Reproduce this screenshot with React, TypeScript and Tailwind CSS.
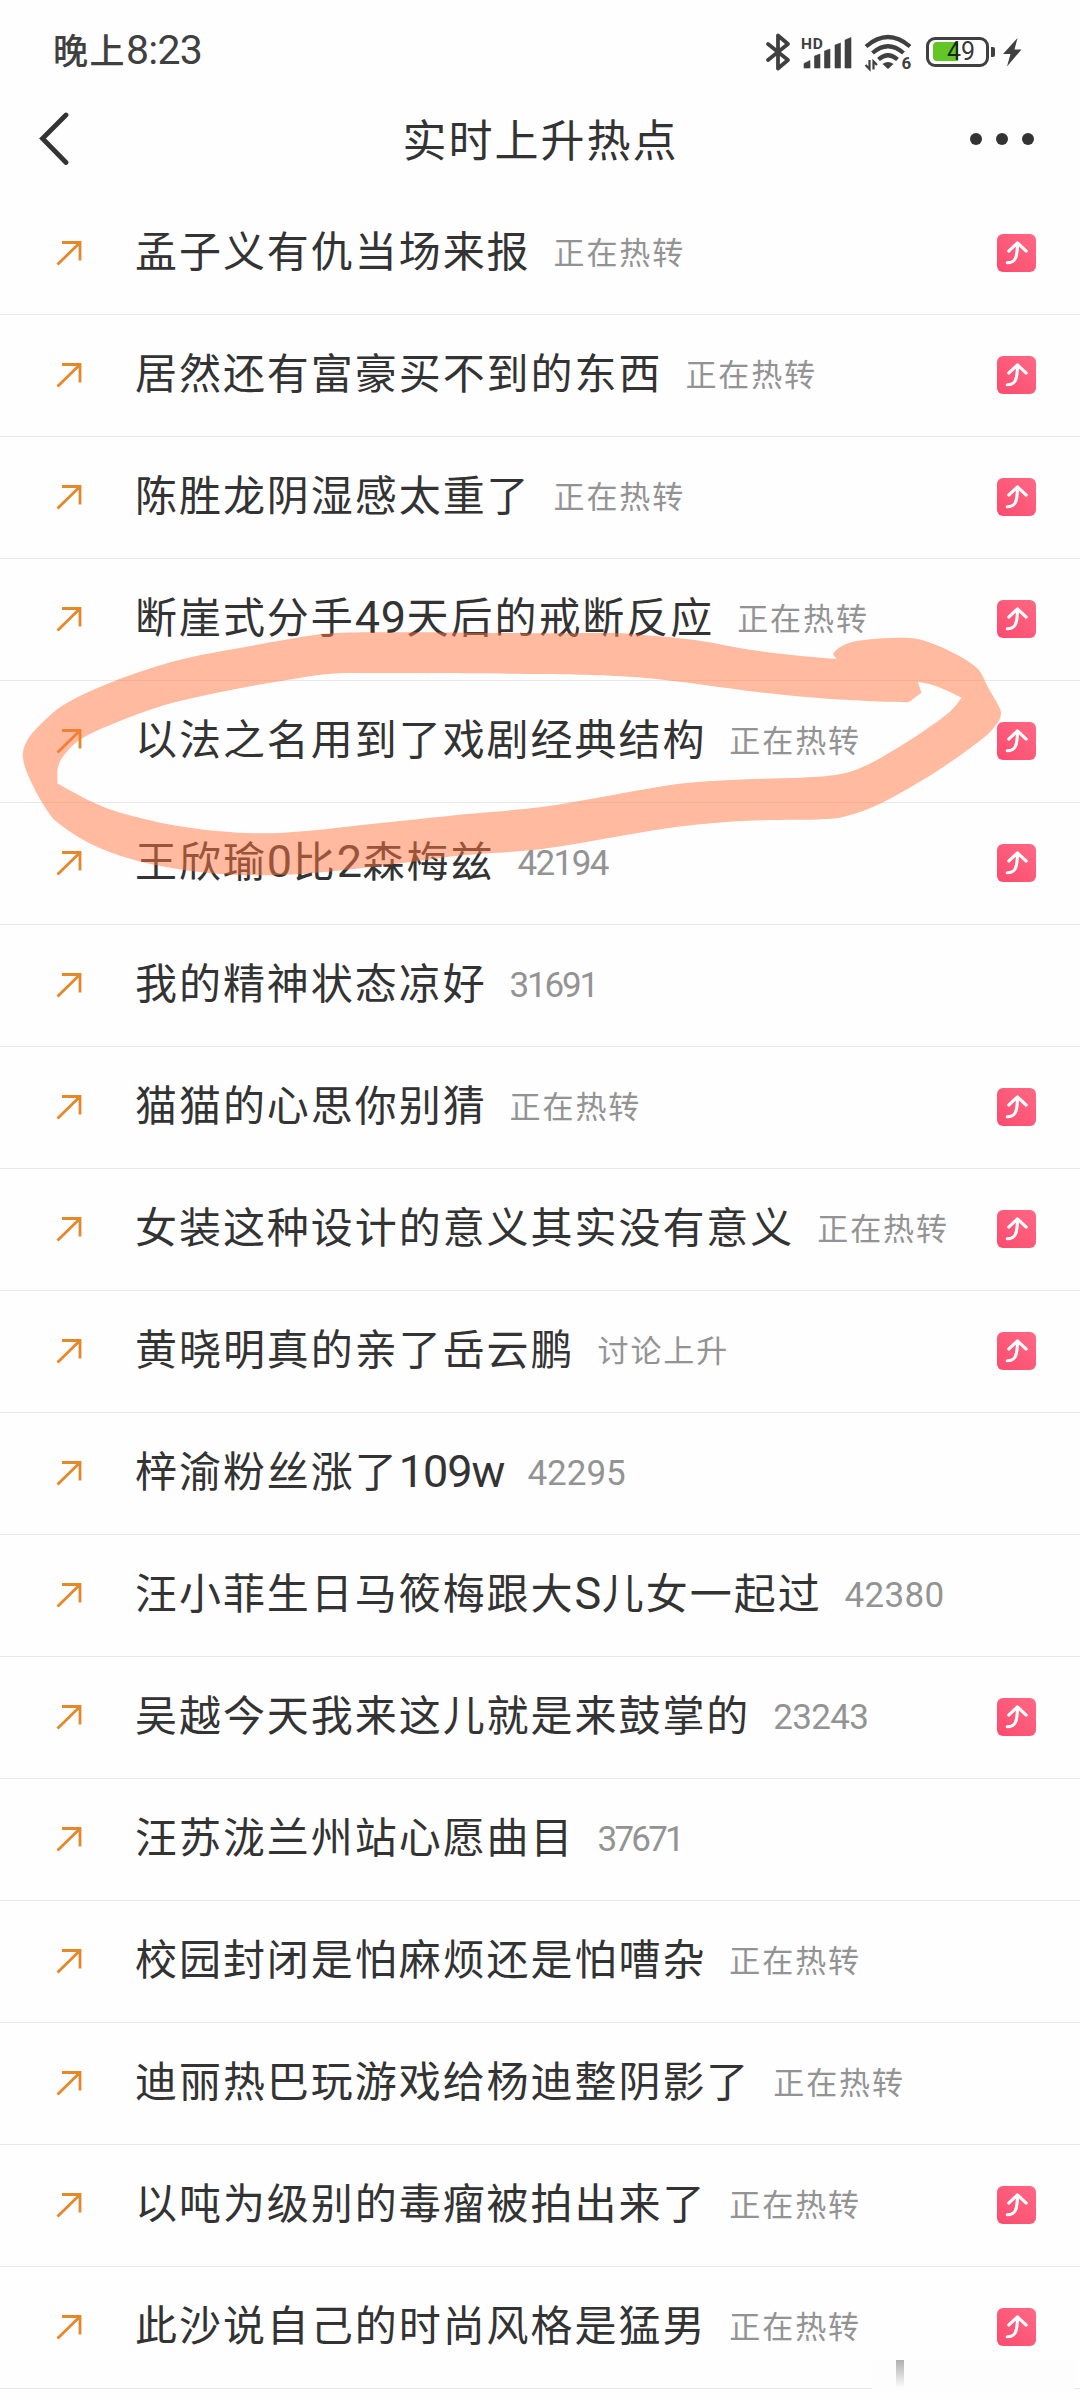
import clsx from 'clsx';

type Topic = {
	title: string;
	note: string;
	noteClass?: string;
	badge?: boolean;
};

type Point = [number, number];

const topics: Topic[] = [
	{ title: '孟子义有仇当场来报', note: '正在热转', badge: true },
	{ title: '居然还有富豪买不到的东西', note: '正在热转', badge: true },
	{ title: '陈胜龙阴湿感太重了', note: '正在热转', badge: true },
	{ title: '断崖式分手49天后的戒断反应', note: '正在热转', badge: true },
	{ title: '以法之名用到了戏剧经典结构', note: '正在热转', badge: true },
	{ title: '王欣瑜0比2森梅兹', note: '42194', noteClass: 'tracking-[-1.6px]', badge: true },
	{ title: '我的精神状态凉好', note: '31691', noteClass: 'tracking-[-2.2px]' },
	{ title: '猫猫的心思你别猜', note: '正在热转', badge: true },
	{ title: '女装这种设计的意义其实没有意义', note: '正在热转', badge: true },
	{ title: '黄晓明真的亲了岳云鹏', note: '讨论上升', badge: true },
	{ title: '梓渝粉丝涨了109w', note: '42295', noteClass: 'tracking-[0px]' },
	{ title: '汪小菲生日马筱梅跟大S儿女一起过', note: '42380', noteClass: 'tracking-[0.3px]' },
	{ title: '吴越今天我来这儿就是来鼓掌的', note: '23243', noteClass: 'tracking-[-0.7px]', badge: true },
	{ title: '汪苏泷兰州站心愿曲目', note: '37671', noteClass: 'tracking-[-2.8px]' },
	{ title: '校园封闭是怕麻烦还是怕嘈杂', note: '正在热转' },
	{ title: '迪丽热巴玩游戏给杨迪整阴影了', note: '正在热转' },
	{ title: '以吨为级别的毒瘤被拍出来了', note: '正在热转', badge: true },
	{ title: '此沙说自己的时尚风格是猛男', note: '正在热转', badge: true },
];

// Each inner array is one smooth run, the runs meet in corners
const outerEdge: Point[][] = [
	[
		[837, 659], [833.7, 652.7], [848, 643.3], [870.6, 639.3], [898, 637.7], [922, 640],
		[953, 652.7], [977, 668], [987.7, 686.7], [999, 706.7], [1000.8, 715], [996, 725],
		[980.8, 740], [936, 771.7], [884, 801.7], [850, 815], [822, 819.3], [746.6, 820.7],
		[677.7, 826.7], [609, 838], [540, 849.3], [465, 855], [413, 861.7], [344, 870],
		[296, 874.3], [241, 875], [189, 870.7], [138, 861], [93, 845], [58.5, 823.3],
		[44.8, 806.7], [31, 781.7], [23, 758], [27.5, 740], [45, 720], [69, 701.7],
		[117, 680], [179, 660], [241, 647.7], [310, 635.7], [344, 632.7], [413, 632.3],
		[540, 633.3], [609, 633], [643, 635], [695, 640], [746.6, 649.3], [798, 655.7],
		[837, 659],
	],
];

const innerEdge: Point[][] = [
	[
		[57.5, 783.5], [58, 767], [65, 754], [82.6, 738], [120.5, 720.7], [172, 703],
		[241, 688], [293, 679], [330.6, 673.7], [379, 673], [540, 674], [629.5, 676.7],
		[684.6, 682.3], [746.6, 690.7], [808.6, 697.3], [867, 701], [908.5, 702.3],
	],
	[[908.5, 702.3], [921.5, 692.7]],
	[[921.5, 692.7], [917.8, 681.7]],
	[[917.8, 681.7], [936, 686], [961.8, 697.7]],
	[
		[961.8, 697.7], [946, 715], [905, 743.3], [867, 765], [839.6, 774.3], [801.7, 777.7],
		[746.6, 779.3], [677.7, 784], [609, 795.7], [540, 807.3], [465, 814.3], [379, 823.3],
		[310, 830.7], [261.7, 833.3], [220, 831.3], [172, 825], [120.5, 812.7], [89.5, 800.7],
		[57.5, 783.5],
	],
];

// Catmull-Rom through the points, written as cubic segments
function spline(runs: Point[][]) {
	let d = `M${runs[0][0].join(' ')}`;
	for (const run of runs) {
		for (let i = 0; i < run.length - 1; i++) {
			const a = run[i - 1] ?? run[i];
			const b = run[i];
			const c = run[i + 1];
			const e = run[i + 2] ?? c;
			d += `C${b[0] + (c[0] - a[0]) / 6} ${b[1] + (c[1] - a[1]) / 6} ${c[0] - (e[0] - b[0]) / 6} ${c[1] - (e[1] - b[1]) / 6} ${c[0]} ${c[1]}`;
		}
	}
	return `${d}Z`;
}

function StatusBar() {
	return (
		<div className="flex h-[103px] items-center justify-between pl-[53px] pr-[58px] text-[#404040]">
			<div className="flex items-baseline pb-[2px] leading-none">
				<span className="text-[35px] font-medium tracking-[1.5px]">晚上</span>
				<span className="font-[Roboto] text-[41px] tracking-[-0.8px]">8:23</span>
			</div>
			<div className="flex items-center font-[Roboto]">
				<svg className="h-[40px] w-[26px]" viewBox="0 0 26 40" fill="none" stroke="currentColor" strokeWidth="3.8" strokeLinejoin="round" strokeLinecap="round">
					<path d="M3 12 23 28 13 36.500V3.500L23 12 3 28" />
				</svg>
				<svg className="ml-[10px] h-[36px] w-[52px] overflow-visible" viewBox="0 0 52 36" fill="currentColor">
					<text x="0" y="14.500" fontSize="15.500" fontWeight="700" letterSpacing="0.8">HD</text>
					<path d="M3 34v-4.500l6-3v7.500zM13.500 34V22l5.500-2v14zM23.500 34V17l5.500-2v19zM34 34V11l5.500-2v25zM44 34V6l6-2.500V34z" stroke="currentColor" strokeWidth="0.6" strokeLinejoin="round" />
				</svg>
				<svg className="ml-[11px] h-[38px] w-[48px] overflow-visible" viewBox="0 0 48 38" fill="none" stroke="currentColor">
					<path d="M2 13.500Q24-5.500 46 13.500" strokeWidth="4.200" />
					<path d="M8.500 20Q24 6.500 39.500 20" strokeWidth="4.200" />
					<path d="M14.500 26.500Q24 18 33.500 26.500" strokeWidth="4.200" />
					<path d="m18.500 31 5.500 5 5.500-5q-5.500-4-11 0z" fill="currentColor" stroke="none" />
					<path d="M1.500 32 5.500 36v-9M9.500 36.500v-8l3.500 3.500" strokeWidth="2.200" />
					<text x="37.500" y="36" fontSize="17" fontWeight="700" fill="currentColor" stroke="none">6</text>
				</svg>
				<div className="ml-[14px] flex items-center">
					<div className="relative flex h-[30px] w-[63px] items-center rounded-[9px] border-[3px] border-current pl-1">
						<div className="h-[19px] w-[25px] rounded-l-[4px] bg-[#63c526]" />
						<span className="absolute inset-0 flex items-center justify-center pl-[7px] text-[25px] leading-none text-black/80">
							49
						</span>
					</div>
					<div className="ml-[2px] h-[10px] w-[4px] rounded-r-[2px] bg-current" />
				</div>
				<svg className="ml-[7px] h-[30px] w-[20px]" viewBox="0 0 20 30" fill="currentColor">
					<path d="M15.500 1 1 17h7.500L5 29.500 19.500 12.500h-7z" />
				</svg>
			</div>
		</div>
	);
}

function Header() {
	return (
		<header className="mb-[18px] grid h-[72px] grid-cols-[1fr_auto_1fr] items-center px-[38px]">
			<svg className="h-[54px] w-[32px]" viewBox="0 0 32 54" fill="none" stroke="#333" strokeWidth="4.800" strokeLinejoin="miter" strokeLinecap="round">
				<path d="M28 3 4.500 26.500 28 50.500" />
			</svg>
			<h1 className="pb-[2px] pl-[1px] text-[44px] leading-none tracking-[2px]">实时上升热点</h1>
			<div className="mr-[8px] flex gap-[14px] justify-self-end">
				<span className="size-[12px] rounded-full bg-[#333]" />
				<span className="size-[12px] rounded-full bg-[#333]" />
				<span className="size-[12px] rounded-full bg-[#333]" />
			</div>
		</header>
	);
}

function RisingBadge() {
	return (
		<span className="mb-[2px] ml-auto h-[38px] w-[39px] rounded-[6px] bg-linear-to-bl from-[#ff6884] to-[#fb4a6f]">
			<svg className="size-full" viewBox="0 0 39 39" fill="none" stroke="#fff" strokeWidth="3.200" strokeLinecap="round" strokeLinejoin="round">
				<path d="M10 29.500C18 29.500 20.500 25 20.500 9M11.500 17.500l9-8.500 9 8.500" />
			</svg>
		</span>
	);
}

// Latin letters and digits are set larger than the Chinese text around them
function TopicTitle({ text }: { text: string }) {
	return (
		<span className="ml-[53px] pb-[9px] text-[42px] leading-none tracking-[1.95px]">
			{text.split(/([0-9A-Za-z]+)/).map((part, i) =>
				i % 2 === 1 ? (
					<span
						key={i}
						className={clsx(
							'font-[Roboto] text-[45px] leading-[0]',
							part.length > 2 ? 'tracking-[-1px]' : 'tracking-[0.6px]'
						)}
					>
						{part}
					</span>
				) : (
					part
				)
			)}
		</span>
	);
}

function TopicRow({ title, note, noteClass, badge }: Topic) {
	return (
		<li className="flex h-[122px] items-center border-b border-[#e8e8e8] pl-[56px] pr-[44px]">
			<svg className="mb-px h-[26px] w-[26px] shrink-0" viewBox="0 0 26 26" fill="none" stroke="#e5882a" strokeWidth="2.800">
				<path d="M1.500 24.500 24 2.500M6 2.500h18v18" />
			</svg>
			<TopicTitle text={title} />
			<span
				className={clsx(
					'ml-[23px] leading-none text-[#939393]',
					noteClass ? 'pb-[1px] font-[Roboto] text-[35px]' : 'pb-[7px] text-[31px] tracking-[1.9px]',
					noteClass
				)}
			>
				{note}
			</span>
			{badge && <RisingBadge />}
		</li>
	);
}

export default function App() {
	return (
		<main className="relative h-[2400px] w-[1080px] overflow-hidden whitespace-nowrap bg-[#fefefe] font-['Noto_Sans_CJK_SC',sans-serif] text-[#333]">
			<StatusBar />
			<Header />
			<ul>
				{topics.map((topic) => (
					<TopicRow key={topic.title} {...topic} />
				))}
			</ul>

			{/* Marker stroke around the fifth topic */}
			<svg className="pointer-events-none absolute inset-0 h-full w-full" viewBox="0 0 1080 2400">
				<path d={spline(outerEdge) + spline(innerEdge)} fill="#ff7541" fillOpacity="0.5" fillRule="evenodd" />
			</svg>

			{/* Faded corner mark */}
			<div className="absolute bottom-[8px] right-[6px] h-[32px] w-[202px] bg-[#fdfdfd]">
				<div className="ml-[24px] h-[28px] w-[8px] bg-linear-to-b from-[#b0b0b0] to-[#fdfdfd]" />
			</div>
		</main>
	);
}
